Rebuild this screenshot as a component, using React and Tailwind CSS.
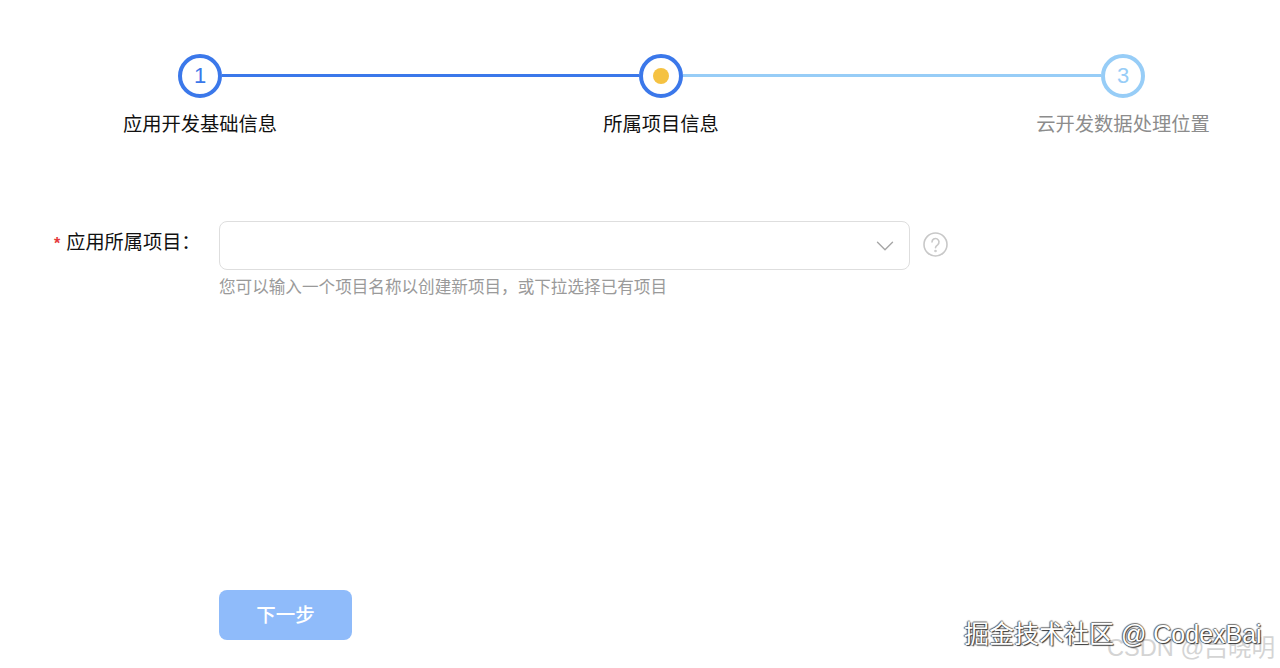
import React from 'react';
import { ChevronDown } from 'lucide-react';

function Step({ label, active, children }) {
  return (
    <div className="flex w-11 shrink-0 flex-col items-center">
      <div className={`flex h-11 w-11 items-center justify-center rounded-full border-[4px] text-[22px] leading-none ${
        active ? 'border-[#3b78ea] text-[#3b78ea]' : 'border-[#97cdf7] text-[#97cdf7]'
      }`}>
        {children}
      </div>
      <div className={`mt-[13px] whitespace-nowrap text-[19.3px] leading-[28px] ${
        active ? 'text-[#111111]' : 'text-[#8c8c8c]'
      }`}>
        {label}
      </div>
    </div>
  );
}

export default function App() {
  return (
    <div className="relative flex h-[668px] w-[1280px] flex-col overflow-hidden bg-white font-['Liberation_Sans','Noto_Sans_CJK_SC',sans-serif]">
      {/* Steps */}
      <div className="flex items-start pl-[178px] pr-[135px] pt-[54px]">
        <Step label="应用开发基础信息" active>1</Step>
        <div className="mt-[20px] h-[3px] w-[417px] shrink-0 bg-[#3b78ea]"></div>
        <Step label="所属项目信息" active>
          <span className="h-4 w-4 rounded-full bg-[#f5c242]"></span>
        </Step>
        <div className="mt-[20px] h-[3px] flex-1 bg-[#97cdf7]"></div>
        <Step label="云开发数据处理位置">3</Step>
      </div>

      {/* Form */}
      <div className="mt-[82px] flex items-start">
        <label className="flex h-[45px] w-[219px] items-center pl-[54px] text-[19.2px] text-[#111111]">
          <span className="mr-[6px] text-[16px] font-bold text-[#e5383b]">*</span>
          <span className="whitespace-nowrap">应用所属项目：</span>
        </label>
        <div className="flex flex-col">
          <div className="flex items-center">
            <div className="flex h-[49px] w-[691px] items-center justify-end rounded-lg border-[1.5px] border-[#dedede] pr-[9px]">
              <ChevronDown size={30} strokeWidth={1.1} className="text-[#a6a6a6]" />
            </div>
            <svg className="mb-[2px] ml-[13px]" width="25" height="25" viewBox="0 0 25 25" fill="none" stroke="#c8c8c8" strokeWidth="1.6" strokeLinecap="round">
              <circle cx="12.5" cy="12.5" r="11.5" />
              <path d="M9 10a3.5 3.5 0 1 1 5.6 2.8c-1.3.9-2.1 1.6-2.1 3" />
              <circle cx="12.5" cy="19" r=".5" />
            </svg>
          </div>
          <div className="mt-[5px] whitespace-nowrap text-[16.6px] leading-[25px] text-[#9a9a9a]">
            您可以输入一个项目名称以创建新项目，或下拉选择已有项目
          </div>
        </div>
      </div>

      {/* Footer button */}
      <div className="mt-auto pb-[28px] pl-[219px]">
        <button className="h-[50px] w-[133px] rounded-lg bg-[#8fbbfa] pt-[2px] text-[19.5px] font-medium text-white">
          下一步
        </button>
      </div>

      {/* Watermarks */}
      <div className="absolute left-[1107px] top-[634px] whitespace-nowrap text-[23.6px] leading-[28px] text-[#d4d4d4]">
        CSDN @吕晓明
      </div>
      <div className="absolute left-[964px] top-[619px] whitespace-nowrap text-[25px] leading-[30px] text-white [text-shadow:1px_1px_1px_#333,-1px_0_1px_#555,0_-1px_1px_#777]">
        掘金技术社区 @ CodexBai
      </div>
    </div>
  );
}
